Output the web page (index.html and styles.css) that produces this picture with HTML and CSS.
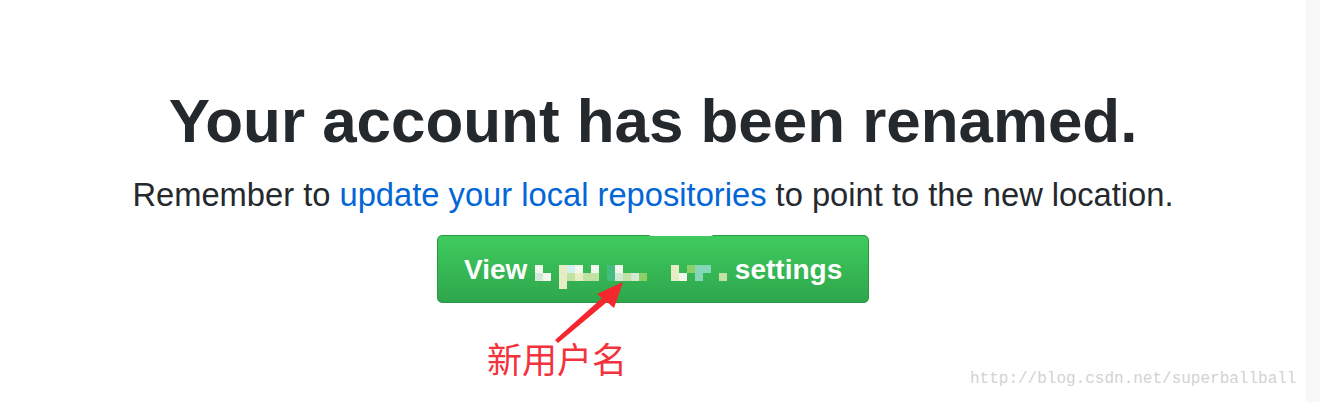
FILE: index.html
```html
<!DOCTYPE html>
<html lang="en">
<head>
<meta charset="utf-8">
<title>Your account has been renamed.</title>
<link rel="stylesheet" href="styles.css">
</head>
<body>
<div class="page">
  <main class="content">
    <h1 class="title">Your account has been renamed.</h1>
    <p class="lead">Remember to <a class="link" href="#">update your local repositories</a> to point to the new location.</p>
    <div class="actions">
      <div class="btn-wrap">
        <a class="btn" href="#">View <span class="mosaic"><span class="col"><i class="a"></i><i class="b"></i><i></i></span><span class="col"><i></i><i class="a"></i><i></i></span><span class="col"><i></i><i></i><i></i></span><span class="col"><i class="c"></i><i class="c"></i><i class="c"></i></span><span class="col"><i class="d"></i><i class="e"></i><i></i></span><span class="col"><i class="a"></i><i class="c"></i><i></i></span><span class="col"><i></i><i class="e"></i><i></i></span><span class="col"><i class="a"></i><i class="e"></i><i></i></span><span class="col"><i></i><i></i><i></i></span><span class="col"><i class="f"></i><i class="f"></i><i></i></span><span class="col"><i class="a"></i><i class="b"></i><i></i></span><span class="col"><i></i><i class="e"></i><i></i></span><span class="col"><i></i><i class="b"></i><i></i></span><span class="col"><i></i><i class="h"></i><i></i></span><span class="col"><i></i><i></i><i></i></span><span class="col"><i></i><i></i><i></i></span><span class="col"><i></i><i></i><i></i></span><span class="col"><i class="c"></i><i class="c"></i><i></i></span><span class="col"><i></i><i class="a"></i><i></i></span><span class="col"><i class="h"></i><i></i><i></i></span><span class="col"><i class="g"></i><i class="g"></i><i></i></span><span class="col"><i class="g"></i><i></i><i></i></span><span class="col"><i></i><i></i><i></i></span><span class="col"><i></i><i class="e"></i><i></i></span></span> settings</a>
        <span class="notch"></span>
        <svg class="arrow" width="80" height="70" viewBox="0 0 80 70" aria-hidden="true">
          <polygon points="5,62 52,20 47,16 73,4 64,30 57,24 8,65" fill="#f4262e"/>
        </svg>
        <span class="note">新用户名</span>
      </div>
    </div>
  </main>
  <div class="stripe"></div>
  <span class="watermark">http://blog.csdn.net/superballball</span>
</div>
</body>
</html>
```

FILE: styles.css
```css
* { box-sizing: border-box; }

html, body {
  margin: 0;
  padding: 0;
  background: #ffffff;
}

.page {
  position: relative;
  display: flex;
  width: 1320px;
  height: 402px;
  overflow: hidden;
}

.content {
  flex: 1;
  display: flex;
  flex-direction: column;
  align-items: center;
  padding-top: 90px;
  font-family: "Liberation Sans", Arial, sans-serif;
  color: #24292e;
}

.stripe {
  width: 14px;
  background: #f8f8f8;
}

.title {
  margin: 0;
  font-size: 61.9px;
  line-height: 62px;
  font-weight: 700;
  white-space: nowrap;
}

.lead {
  margin: 23px 0 0;
  font-size: 32.7px;
  line-height: 40px;
  white-space: nowrap;
}

.link {
  color: #0366d6;
  text-decoration: none;
}

.actions {
  margin-top: 20px;
  display: flex;
  justify-content: center;
}

.btn-wrap {
  position: relative;
}

.btn {
  display: block;
  width: 432px;
  height: 68px;
  padding: 0 0 0 26px;
  border: 1px solid #2a9845;
  border-radius: 5px;
  background-image: linear-gradient(180deg, #3fcb5e 0%, #2ea64c 100%);
  color: #ffffff;
  font-size: 28px;
  font-weight: 700;
  line-height: 68px;
  text-decoration: none;
  white-space: nowrap;
}

.mosaic {
  display: inline-flex;
  vertical-align: 6px;
}

.mosaic .col {
  display: flex;
  flex-direction: column;
}

.mosaic i {
  display: block;
  width: 8px;
  height: 8px;
}

.mosaic .a { background: #f3f8ee; }
.mosaic .b { background: #d2ead4; }
.mosaic .c { background: #e6ecc4; }
.mosaic .d { background: #d2f0ee; }
.mosaic .e { background: #c2e2a4; }
.mosaic .f { background: #44bc80; }
.mosaic .g { background: #84d8b8; }
.mosaic .h { background: #8ccf66; }

.notch {
  position: absolute;
  left: 212px;
  top: -3px;
  width: 64px;
  height: 4px;
  background: #ffffff;
  border-radius: 2px;
}

.arrow {
  position: absolute;
  left: 113px;
  top: 43px;
}

.note {
  position: absolute;
  left: 50px;
  top: 105px;
  font-family: "Noto Sans CJK SC", sans-serif;
  font-size: 35px;
  line-height: 35px;
  color: #f2333d;
  white-space: nowrap;
}

.watermark {
  position: absolute;
  left: 970px;
  top: 371px;
  font-family: "Liberation Mono", "DejaVu Sans Mono", monospace;
  font-size: 16px;
  line-height: 16px;
  color: #d2d2d2;
  white-space: nowrap;
}
```
